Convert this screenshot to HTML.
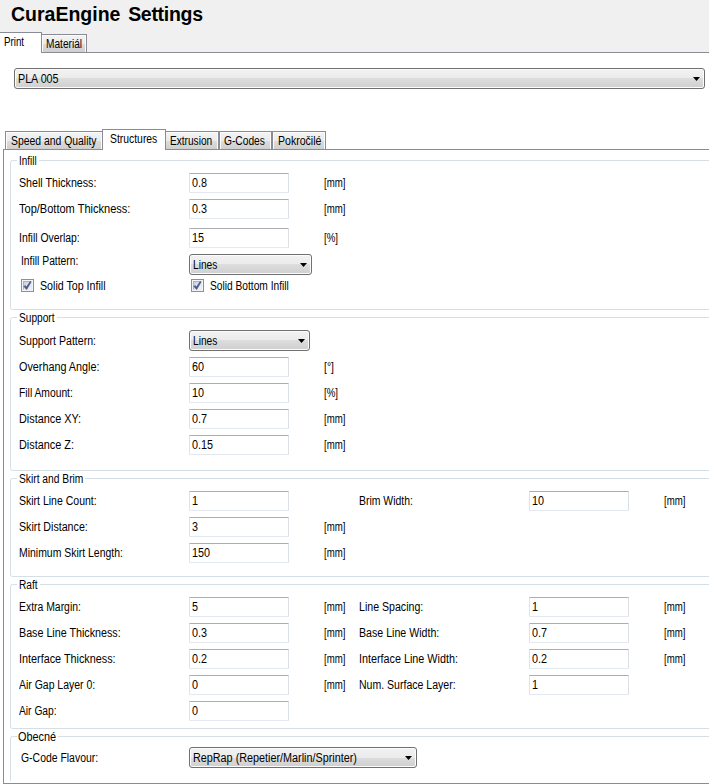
<!DOCTYPE html>
<html lang="cs"><head><meta charset="utf-8"><title>CuraEngine Settings</title>
<style>
html,body{margin:0;padding:0}
body{width:709px;height:784px;overflow:hidden;background:#f0f0f0;position:relative;font-family:"Liberation Sans", Arial, sans-serif;font-size:12px;color:#000;line-height:13px}
.t{position:absolute;white-space:nowrap;height:13px;line-height:13px;transform-origin:0 0}
.title{position:absolute;left:11px;top:2px;font-size:19.5px;font-weight:bold;line-height:24px;white-space:nowrap}
.page{position:absolute;left:0;top:53px;width:709px;height:731px;background:#fff}
.hl{position:absolute;left:0;top:52px;width:709px;height:1px;background:#898c95}
.tab{position:absolute;box-sizing:border-box;border:1px solid #898c95;border-bottom:none;background:linear-gradient(#f3f3f3 0,#ebebeb 50%,#dddddd 50%,#cfcfcf 100%);box-shadow:inset 1px 1px 0 #fcfcfc, inset -1px 0 0 #fcfcfc}
.tab.sel{background:#fff;box-shadow:none}
.pane{position:absolute;left:3px;top:149px;width:720px;height:635px;box-sizing:border-box;border:1px solid #898c95;background:#fff}
.gb{position:absolute;box-sizing:border-box;border:1px solid #d5dfe5;border-radius:2.5px;left:10px;width:720px}
.gm{position:absolute;background:#fff;height:3px}
.tb{position:absolute;box-sizing:border-box;width:100px;height:20px;background:#fff;border:1px solid;border-color:#abadb3 #dbdfe6 #e3e9ef #e2e3ea;border-radius:1px}
.cb{position:absolute;box-sizing:border-box;height:21px;border:1px solid #707070;border-radius:3px;background:linear-gradient(#f2f2f2 0,#ebebeb 50%,#dddddd 50%,#cfcfcf 100%);box-shadow:inset 0 0 0 1px #fcfcfc}
.cb svg{position:absolute;right:4px;top:8px}
.ck{position:absolute;box-sizing:border-box;width:13px;height:13px;border:1px solid #8e8f8f;background:#f4f4f4}
.ck b{position:absolute;left:1px;top:1px;width:9px;height:9px;box-sizing:border-box;border:1px solid;border-color:#aeb3b9 #e9e9ea #e9e9ea #aeb3b9;background:linear-gradient(135deg,#cbcfd5,#f6f6f6)}
.ck svg{position:absolute;left:1px;top:1px}
</style></head>
<body>
<div class="title">CuraEngine<span style="letter-spacing:-0.3px;margin-left:2.6px"> Settings</span></div>
<div class="page"></div><div class="hl"></div>
<div class="tab" style="left:41px;top:34px;width:46px;height:18px"></div>
<div class="tab sel" style="left:-1px;top:32px;width:43px;height:21px"></div>
<div class="cb" style="left:14px;top:68px;width:691px"><svg width="7" height="4" viewBox="0 0 7 4"><path d="M0 0H7L3.5 4Z" fill="#000"/></svg></div>
<div class="pane"></div>
<div class="tab" style="left:5px;top:131px;width:98px;height:18px"></div>
<div class="tab" style="left:164px;top:131px;width:55px;height:18px"></div>
<div class="tab" style="left:219px;top:131px;width:53px;height:18px"></div>
<div class="tab" style="left:272px;top:131px;width:54px;height:18px"></div>
<div class="tab sel" style="left:102px;top:129px;width:64px;height:21px"></div>
<div class="gb" style="top:160px;height:150px"></div>
<div class="gm" style="left:17px;top:159px;width:22px"></div>
<div class="gb" style="top:317px;height:154px"></div>
<div class="gm" style="left:17px;top:316px;width:40px"></div>
<div class="gb" style="top:478px;height:99px"></div>
<div class="gm" style="left:17px;top:477px;width:68px"></div>
<div class="gb" style="top:584px;height:145px"></div>
<div class="gm" style="left:17px;top:583px;width:23px"></div>
<div class="gb" style="top:736px;height:65px"></div>
<div class="gm" style="left:17px;top:735px;width:41px"></div>
<div style="position:absolute;left:4px;top:781px;width:705px;height:2px;background:#fff"></div><div style="position:absolute;left:3px;top:783px;width:706px;height:1px;background:#898c95"></div>
<div class="tb" style="left:189px;top:173px"></div>
<div class="t" style="left:191.60px;top:177px;transform:scaleX(0.9)">0.8</div>
<div class="tb" style="left:189px;top:199px"></div>
<div class="t" style="left:191.60px;top:203px;transform:scaleX(0.9)">0.3</div>
<div class="tb" style="left:189px;top:228px"></div>
<div class="t" style="left:191.60px;top:232px;transform:scaleX(0.9)">15</div>
<div class="tb" style="left:189px;top:357px"></div>
<div class="t" style="left:191.60px;top:361px;transform:scaleX(0.9)">60</div>
<div class="tb" style="left:189px;top:383px"></div>
<div class="t" style="left:191.60px;top:387px;transform:scaleX(0.9)">10</div>
<div class="tb" style="left:189px;top:409px"></div>
<div class="t" style="left:191.60px;top:413px;transform:scaleX(0.9)">0.7</div>
<div class="tb" style="left:189px;top:435px"></div>
<div class="t" style="left:191.60px;top:439px;transform:scaleX(0.9)">0.15</div>
<div class="tb" style="left:189px;top:491px"></div>
<div class="t" style="left:191.60px;top:495px;transform:scaleX(0.9)">1</div>
<div class="tb" style="left:189px;top:517px"></div>
<div class="t" style="left:191.60px;top:521px;transform:scaleX(0.9)">3</div>
<div class="tb" style="left:189px;top:543px"></div>
<div class="t" style="left:191.60px;top:547px;transform:scaleX(0.9)">150</div>
<div class="tb" style="left:529px;top:491px"></div>
<div class="t" style="left:531.60px;top:495px;transform:scaleX(0.9)">10</div>
<div class="tb" style="left:189px;top:597px"></div>
<div class="t" style="left:191.60px;top:601px;transform:scaleX(0.9)">5</div>
<div class="tb" style="left:189px;top:623px"></div>
<div class="t" style="left:191.60px;top:627px;transform:scaleX(0.9)">0.3</div>
<div class="tb" style="left:189px;top:649px"></div>
<div class="t" style="left:191.60px;top:653px;transform:scaleX(0.9)">0.2</div>
<div class="tb" style="left:189px;top:675px"></div>
<div class="t" style="left:191.60px;top:679px;transform:scaleX(0.9)">0</div>
<div class="tb" style="left:189px;top:701px"></div>
<div class="t" style="left:191.60px;top:705px;transform:scaleX(0.9)">0</div>
<div class="tb" style="left:529px;top:597px"></div>
<div class="t" style="left:531.60px;top:601px;transform:scaleX(0.9)">1</div>
<div class="tb" style="left:529px;top:623px"></div>
<div class="t" style="left:531.60px;top:627px;transform:scaleX(0.9)">0.7</div>
<div class="tb" style="left:529px;top:649px"></div>
<div class="t" style="left:531.60px;top:653px;transform:scaleX(0.9)">0.2</div>
<div class="tb" style="left:529px;top:675px"></div>
<div class="t" style="left:531.60px;top:679px;transform:scaleX(0.9)">1</div>
<div class="cb" style="left:189px;top:254px;width:123px"><svg width="7" height="4" viewBox="0 0 7 4"><path d="M0 0H7L3.5 4Z" fill="#000"/></svg></div>
<div class="cb" style="left:189px;top:330px;width:121px"><svg width="7" height="4" viewBox="0 0 7 4"><path d="M0 0H7L3.5 4Z" fill="#000"/></svg></div>
<div class="cb" style="left:189px;top:747px;width:228px"><svg width="7" height="4" viewBox="0 0 7 4"><path d="M0 0H7L3.5 4Z" fill="#000"/></svg></div>
<div class="ck" style="left:21px;top:279px"><b></b><svg width="11" height="11" viewBox="0 0 11 11"><path d="M1.0 5.5 L3.6 8.5 L8.0 1.1 L7.1 0.5 L3.6 6.1 L2.1 4.4 Z" fill="#44589a" stroke="#44589a" stroke-width="0.7" stroke-linejoin="round"/></svg></div>
<div class="ck" style="left:191px;top:279px"><b></b><svg width="11" height="11" viewBox="0 0 11 11"><path d="M1.0 5.5 L3.6 8.5 L8.0 1.1 L7.1 0.5 L3.6 6.1 L2.1 4.4 Z" fill="#44589a" stroke="#44589a" stroke-width="0.7" stroke-linejoin="round"/></svg></div>
<div class="t" style="left:3.59px;top:36px;transform:scaleX(0.8125)">Print</div>
<div class="t" style="left:46.26px;top:38px;transform:scaleX(0.8439)">Materiál</div>
<div class="t" style="left:18.21px;top:73px;transform:scaleX(0.8932)">PLA 005</div>
<div class="t" style="left:11.13px;top:135px;transform:scaleX(0.8663)">Speed and Quality</div>
<div class="t" style="left:110.03px;top:133px;transform:scaleX(0.8651)">Structures</div>
<div class="t" style="left:169.66px;top:135px;transform:scaleX(0.8427)">Extrusion</div>
<div class="t" style="left:223.95px;top:135px;transform:scaleX(0.8521)">G-Codes</div>
<div class="t" style="left:277.67px;top:135px;transform:scaleX(0.8802)">Pokročilé</div>
<div class="t" style="left:19.12px;top:155px;transform:scaleX(0.8250)">Infill</div>
<div class="t" style="left:19.31px;top:177px;transform:scaleX(0.8882)">Shell Thickness:</div>
<div class="t" style="left:18.90px;top:203px;transform:scaleX(0.9196)">Top/Bottom Thickness:</div>
<div class="t" style="left:19.08px;top:232px;transform:scaleX(0.8676)">Infill Overlap:</div>
<div class="t" style="left:20.64px;top:255px;transform:scaleX(0.8608)">Infill Pattern:</div>
<div class="t" style="left:39.61px;top:280px;transform:scaleX(0.8875)">Solid Top Infill</div>
<div class="t" style="left:209.65px;top:280px;transform:scaleX(0.8505)">Solid Bottom Infill</div>
<div class="t" style="left:193.35px;top:259px;transform:scaleX(0.8481)">Lines</div>
<div class="t" style="left:19.35px;top:312px;transform:scaleX(0.8463)">Support</div>
<div class="t" style="left:19.32px;top:335px;transform:scaleX(0.8812)">Support Pattern:</div>
<div class="t" style="left:193.35px;top:335px;transform:scaleX(0.8481)">Lines</div>
<div class="t" style="left:18.60px;top:361px;transform:scaleX(0.9006)">Overhang Angle:</div>
<div class="t" style="left:18.64px;top:387px;transform:scaleX(0.8590)">Fill Amount:</div>
<div class="t" style="left:18.60px;top:413px;transform:scaleX(0.9045)">Distance XY:</div>
<div class="t" style="left:18.59px;top:439px;transform:scaleX(0.9059)">Distance Z:</div>
<div class="t" style="left:19.35px;top:473px;transform:scaleX(0.8541)">Skirt and Brim</div>
<div class="t" style="left:19.32px;top:495px;transform:scaleX(0.8759)">Skirt Line Count:</div>
<div class="t" style="left:19.31px;top:521px;transform:scaleX(0.8893)">Skirt Distance:</div>
<div class="t" style="left:18.63px;top:547px;transform:scaleX(0.8705)">Minimum Skirt Length:</div>
<div class="t" style="left:358.83px;top:495px;transform:scaleX(0.8692)">Brim Width:</div>
<div class="t" style="left:18.65px;top:579px;transform:scaleX(0.8452)">Raft</div>
<div class="t" style="left:18.63px;top:601px;transform:scaleX(0.8674)">Extra Margin:</div>
<div class="t" style="left:18.61px;top:627px;transform:scaleX(0.8933)">Base Line Thickness:</div>
<div class="t" style="left:18.60px;top:653px;transform:scaleX(0.9014)">Interface Thickness:</div>
<div class="t" style="left:19.20px;top:679px;transform:scaleX(0.8715)">Air Gap Layer 0:</div>
<div class="t" style="left:19.20px;top:705px;transform:scaleX(0.8547)">Air Gap:</div>
<div class="t" style="left:358.82px;top:601px;transform:scaleX(0.8838)">Line Spacing:</div>
<div class="t" style="left:358.82px;top:627px;transform:scaleX(0.8848)">Base Line Width:</div>
<div class="t" style="left:358.80px;top:653px;transform:scaleX(0.8986)">Interface Line Width:</div>
<div class="t" style="left:358.82px;top:679px;transform:scaleX(0.8778)">Num. Surface Layer:</div>
<div class="t" style="left:18.20px;top:731px;transform:scaleX(0.9048)">Obecné</div>
<div class="t" style="left:21.33px;top:752px;transform:scaleX(0.8695)">G-Code Flavour:</div>
<div class="t" style="left:192.80px;top:752px;transform:scaleX(0.9000)">RepRap (Repetier/Marlin/Sprinter)</div>
<div class="t" style="left:324.15px;top:177px;transform:scaleX(0.8040)">[mm]</div>
<div class="t" style="left:324.15px;top:203px;transform:scaleX(0.8040)">[mm]</div>
<div class="t" style="left:324.14px;top:232px;transform:scaleX(0.8094)">[%]</div>
<div class="t" style="left:324.08px;top:361px;transform:scaleX(0.8650)">[°]</div>
<div class="t" style="left:324.14px;top:387px;transform:scaleX(0.8094)">[%]</div>
<div class="t" style="left:324.15px;top:413px;transform:scaleX(0.8040)">[mm]</div>
<div class="t" style="left:324.15px;top:439px;transform:scaleX(0.8040)">[mm]</div>
<div class="t" style="left:324.15px;top:521px;transform:scaleX(0.8040)">[mm]</div>
<div class="t" style="left:324.15px;top:547px;transform:scaleX(0.8040)">[mm]</div>
<div class="t" style="left:324.15px;top:601px;transform:scaleX(0.8040)">[mm]</div>
<div class="t" style="left:324.15px;top:627px;transform:scaleX(0.8040)">[mm]</div>
<div class="t" style="left:324.15px;top:653px;transform:scaleX(0.8040)">[mm]</div>
<div class="t" style="left:324.15px;top:679px;transform:scaleX(0.8040)">[mm]</div>
<div class="t" style="left:664.15px;top:495px;transform:scaleX(0.8040)">[mm]</div>
<div class="t" style="left:664.15px;top:601px;transform:scaleX(0.8040)">[mm]</div>
<div class="t" style="left:664.15px;top:627px;transform:scaleX(0.8040)">[mm]</div>
<div class="t" style="left:664.15px;top:653px;transform:scaleX(0.8040)">[mm]</div>
</body></html>
